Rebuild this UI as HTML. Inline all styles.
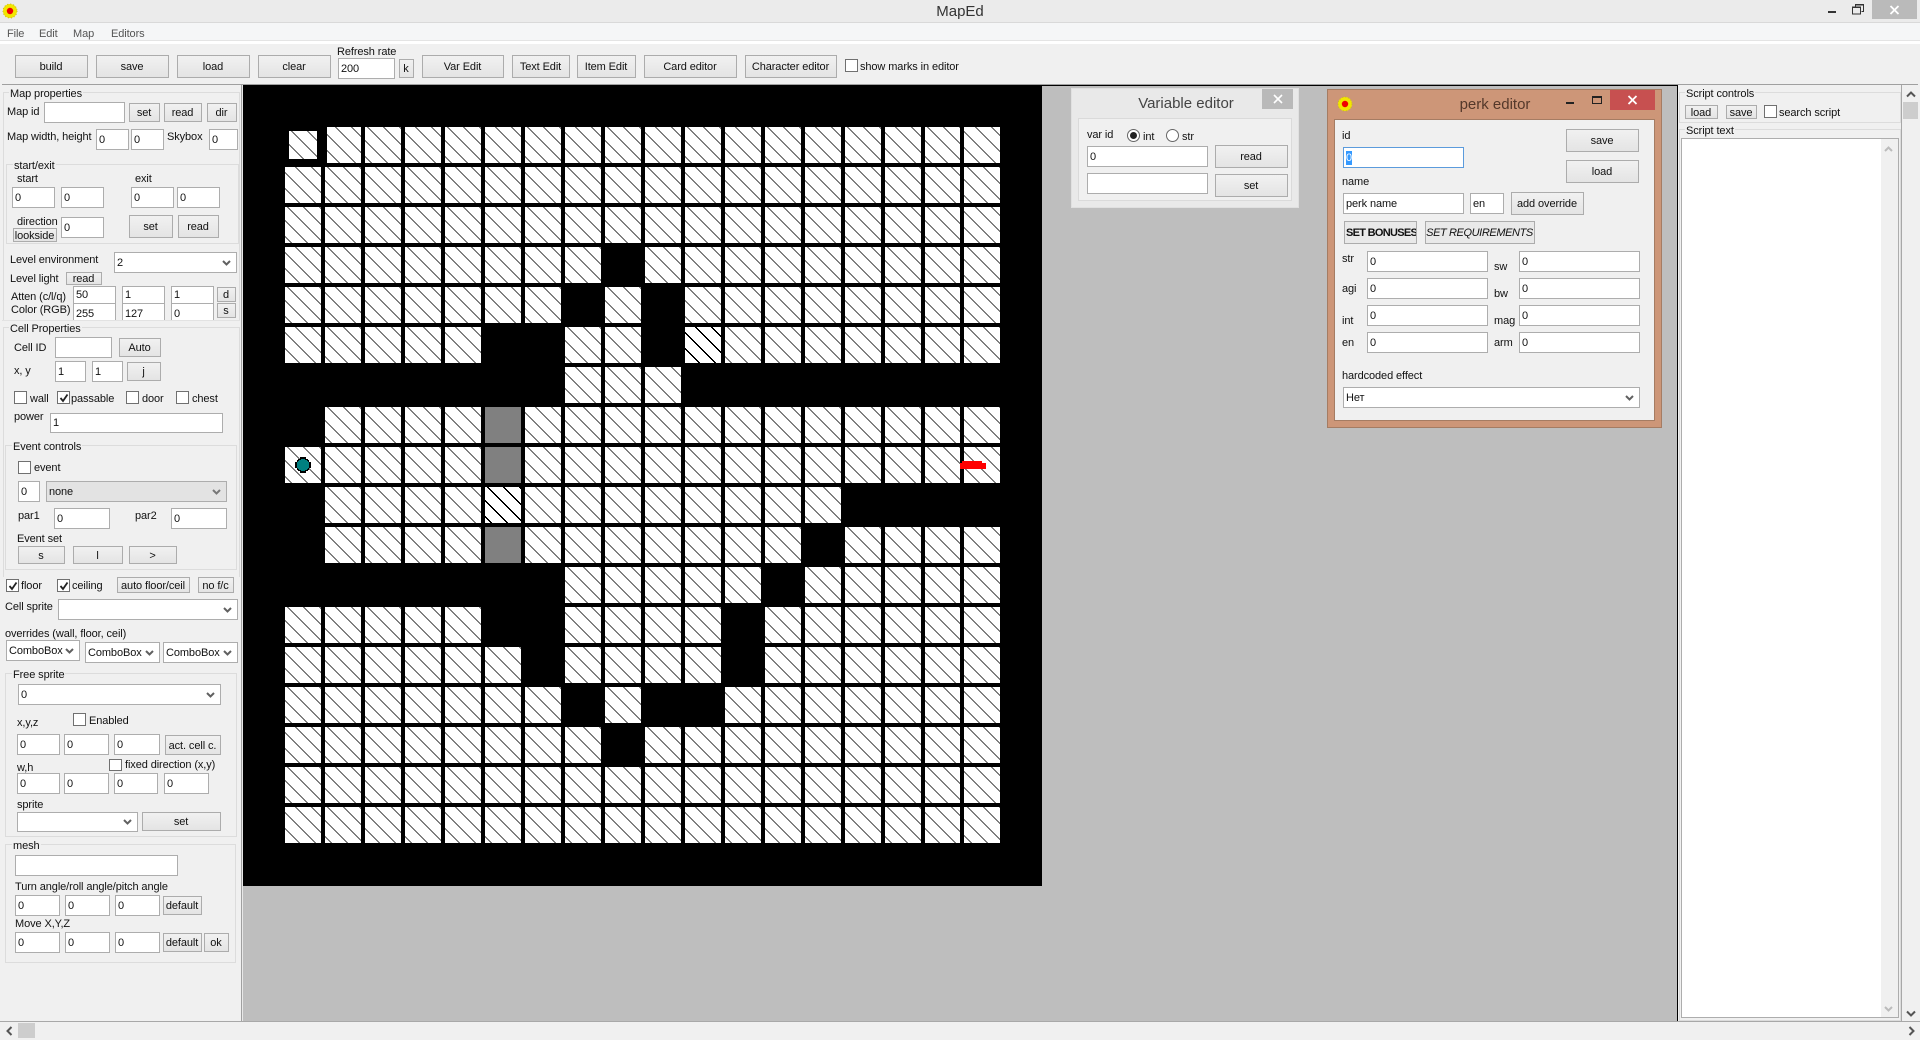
<!DOCTYPE html>
<html><head><meta charset="utf-8"><title>MapEd</title>
<style>
html,body{margin:0;padding:0;width:1920px;height:1040px;overflow:hidden;background:#f0f0f0}
body{position:relative;font:11px/14px "Liberation Sans","Noto Sans CJK SC",sans-serif;color:#000;letter-spacing:-.1px}
div,svg{position:absolute;box-sizing:border-box}
.l{white-space:nowrap;line-height:14px;color:#111;margin-top:1px}
.i{background:#fff;border:1px solid #adadad;padding:0 0 0 2px;display:flex;align-items:center;white-space:nowrap;overflow:hidden;color:#111}
.b{background:linear-gradient(#f1f1f1,#e4e4e4);border:1px solid #acacac;display:flex;align-items:center;justify-content:center;white-space:nowrap;overflow:hidden;color:#111;padding:1px 1px 0 0}
.g{border:1px solid #dcdcdc}
.t{background:#f0f0f0;padding:0 1px;line-height:14px;white-space:nowrap;color:#111;margin-top:1px}
.c{background:#fff;border:1px solid #707070;width:13px;height:13px}
.v{right:5px;top:50%;margin-top:-3px}
.s{background:#fff;border:1px solid #adadad;padding-left:2px;display:flex;align-items:center;white-space:nowrap;overflow:hidden;color:#111}
</style></head>
<body>
<!-- title bar -->
<div style="left:0;top:0;width:1920px;height:23px;background:#ebebeb;border-bottom:1px solid #d9d9d9"></div>
<svg style="left:1px;top:3px" width="18" height="16"><circle cx="9" cy="8" r="7" fill="#f2e600"/><circle cx="9" cy="8" r="7" fill="none" stroke="#c8b820" stroke-dasharray="1 2"/><circle cx="9" cy="8" r="3.2" fill="#f00000"/></svg>
<div style="left:860px;top:2px;width:200px;text-align:center;font-size:15px;line-height:19px;color:#333;letter-spacing:0">MapEd</div>
<div style="left:1828px;top:11px;width:8px;height:2px;background:#333"></div>
<svg style="left:1852px;top:4px" width="13" height="11"><path d="M3.5 2.5V.5h8v7h-2M.5 3h8v7h-8z" fill="none" stroke="#333"/><path d="M.5 3.5h8M3.5 1h8" stroke="#333"/></svg>
<div style="left:1872px;top:0;width:45px;height:19px;background:#bababa"></div>
<svg style="left:1889px;top:5px" width="11" height="10"><path d="M1.5 1l8 8M9.5 1l-8 8" stroke="#fff" stroke-width="1.8"/></svg>
<!-- menu -->
<div style="left:0;top:23px;width:1920px;height:18px;background:#f5f6f7;border-bottom:1px solid #e4e4e4"></div>
<div class="l" style="left:7px;top:26px;color:#555">File</div>
<div class="l" style="left:39px;top:26px;color:#555">Edit</div>
<div class="l" style="left:73px;top:26px;color:#555">Map</div>
<div class="l" style="left:111px;top:26px;color:#555">Editors</div>
<div style="left:0;top:41px;width:1920px;height:3px;background:#fff"></div>
<!-- toolbar -->
<div style="left:2px;top:44px;width:1916px;height:41px;background:#f0f0f0;border-bottom:1px solid #a0a0a0"></div>
<div class="b" style="left:15px;top:55px;width:73px;height:23px">build</div>
<div class="b" style="left:96px;top:55px;width:73px;height:23px">save</div>
<div class="b" style="left:177px;top:55px;width:73px;height:23px">load</div>
<div class="b" style="left:258px;top:55px;width:73px;height:23px">clear</div>
<div class="l" style="left:337px;top:44px">Refresh rate</div>
<div class="i" style="left:338px;top:58px;width:57px;height:21px">200</div>
<div class="b" style="left:399px;top:59px;width:15px;height:19px">k</div>
<div class="b" style="left:422px;top:55px;width:82px;height:23px">Var Edit</div>
<div class="b" style="left:512px;top:55px;width:58px;height:23px">Text Edit</div>
<div class="b" style="left:577px;top:55px;width:59px;height:23px">Item Edit</div>
<div class="b" style="left:644px;top:55px;width:93px;height:23px">Card editor</div>
<div class="b" style="left:745px;top:55px;width:92px;height:23px">Character editor</div>
<div class="c" style="left:845px;top:59px"></div>
<div class="l" style="left:860px;top:59px">show marks in editor</div>

<!-- MDI area -->
<div style="left:242px;top:85px;width:1436px;height:937px;background:#bebebe;border-left:1px solid #e8e8e8"></div>
<div style="left:1677px;top:85px;width:1px;height:937px;background:#000"></div>
<div style="left:243px;top:85px;width:1434px;height:1px;background:#000"></div>
<svg style="left:243px;top:85px" width="799" height="801" viewBox="243 85 799 801" shape-rendering="crispEdges">
<defs>
<pattern id="h" width="16" height="16" patternUnits="userSpaceOnUse" x="0" y="0"><rect width="16" height="16" fill="#fff"/><path d="M0 0h2v1H0zM1 1h2v1H1zM2 2h2v1H2zM3 3h2v1H3zM4 4h2v1H4zM5 5h2v1H5zM6 6h2v1H6zM7 7h2v1H7zM8 8h2v1H8zM9 9h2v1H9zM10 10h2v1h-2zM11 11h2v1h-2zM12 12h2v1h-2zM13 13h2v1h-2zM14 14h2v1h-2zM15 15h1v1h-1zM0 15h1v1H0z" fill="#808080"/></pattern>
<pattern id="d" width="16" height="16" patternUnits="userSpaceOnUse" x="0" y="0"><rect width="16" height="16" fill="#fff"/><path d="M0 0h2v1H0zM1 1h2v1H1zM2 2h2v1H2zM3 3h2v1H3zM4 4h2v1H4zM5 5h2v1H5zM6 6h2v1H6zM7 7h2v1H7zM8 8h2v1H8zM9 9h2v1H9zM10 10h2v1h-2zM11 11h2v1h-2zM12 12h2v1h-2zM13 13h2v1h-2zM14 14h2v1h-2zM15 15h1v1h-1zM0 15h1v1H0z" fill="#000"/></pattern>
</defs>
<rect x="243" y="85" width="799" height="801" fill="#000"/>
<rect x="285" y="127" width="715" height="716" fill="url(#h)"/>
<path fill="#000" d="M321 127h4v716h-4zM361 127h4v716h-4zM401 127h4v716h-4zM441 127h4v716h-4zM481 127h4v716h-4zM521 127h4v716h-4zM561 127h4v716h-4zM601 127h4v716h-4zM641 127h4v716h-4zM681 127h4v716h-4zM721 127h4v716h-4zM761 127h4v716h-4zM801 127h4v716h-4zM841 127h4v716h-4zM881 127h4v716h-4zM921 127h4v716h-4zM960 127h4v716h-4z
M285 163h716v4H285zM285 203h716v4H285zM285 243h716v4H285zM285 283h716v4H285zM285 323h716v4H285zM285 363h716v4H285zM285 403h716v4H285zM285 443h716v4H285zM285 483h716v4H285zM285 523h716v4H285zM285 563h716v4H285zM285 603h716v4H285zM285 643h716v4H285zM285 683h716v4H285zM285 723h716v4H285zM285 763h716v4H285zM285 803h716v4H285z"/>
<!-- missing cells -->
<path fill="#000" d="M285 127h42v36h-42zM605 247h36v36h-36zM565 287h36v36h-36zM645 287h36v36h-36zM485 327h76v36h-76zM645 327h36v36h-36zM285 367h276v36H285zM685 367h316v36H685zM285 407h36v36h-36zM285 487h36v36h-36zM845 487h156v36H845zM285 527h36v36h-36zM805 527h36v36h-36zM285 567h276v36H285zM765 567h36v36h-36zM485 607h76v36h-76zM725 607h36v36h-36zM525 647h36v36h-36zM725 647h36v36h-36zM565 687h36v36h-36zM645 687h76v36h-76zM605 727h36v36h-36z"/>
<rect x="289" y="131" width="28" height="28" fill="url(#h)"/>
<rect x="485" y="407" width="36" height="36" fill="#808080"/>
<rect x="485" y="447" width="36" height="36" fill="#808080"/>
<rect x="485" y="527" width="36" height="36" fill="#808080"/>
<rect x="485" y="487" width="36" height="36" fill="url(#d)"/>
<rect x="685" y="327" width="36" height="36" fill="url(#d)"/>
<!-- dot -->
<path d="M300 457h6v2h2v1h1v2h2v6h-2v2h-1v1h-2v2h-6v-2h-2v-1h-1v-2h-2v-6h2v-2h1v-1h2z" fill="#000"/>
<path d="M301 459h4v1h2v1h1v1h1v6h-1v1h-1v1h-2v1h-4v-1h-2v-1h-1v-1h-1v-6h1v-1h1v-1h2z" fill="#008080"/>
<!-- red marker -->
<path d="M962 461h20v2h4v6h-26v-6h2z" fill="#f00"/>
</svg>

<!-- LEFT PANEL -->
<div style="left:0;top:85px;width:242px;height:937px;background:#f0f0f0;border-right:1px solid #a0a0a0"></div>
<div class="g" style="left:3px;top:92px;width:237px;height:235px"></div>
<div class="t" style="left:9px;top:86px">Map properties</div>
<div class="l" style="left:7px;top:104px">Map id</div>
<div class="i" style="left:44px;top:102px;width:81px;height:21px"></div>
<div class="b" style="left:129px;top:103px;width:31px;height:19px">set</div>
<div class="b" style="left:164px;top:103px;width:38px;height:19px">read</div>
<div class="b" style="left:207px;top:103px;width:30px;height:19px">dir</div>
<div class="l" style="left:7px;top:129px">Map width, height</div>
<div class="i" style="left:96px;top:129px;width:33px;height:21px">0</div>
<div class="i" style="left:131px;top:129px;width:33px;height:21px">0</div>
<div class="l" style="left:167px;top:129px">Skybox</div>
<div class="i" style="left:209px;top:129px;width:29px;height:21px">0</div>

<div class="g" style="left:6px;top:164px;width:233px;height:80px"></div>
<div class="t" style="left:13px;top:158px">start/exit</div>
<div class="l" style="left:17px;top:171px">start</div>
<div class="l" style="left:135px;top:171px">exit</div>
<div class="i" style="left:12px;top:187px;width:43px;height:21px">0</div>
<div class="i" style="left:61px;top:187px;width:43px;height:21px">0</div>
<div class="i" style="left:131px;top:187px;width:43px;height:21px">0</div>
<div class="i" style="left:177px;top:187px;width:43px;height:21px">0</div>
<div class="l" style="left:17px;top:214px">direction</div>
<div class="b" style="left:13px;top:228px;width:44px;height:14px">lookside</div>
<div class="i" style="left:61px;top:217px;width:43px;height:21px">0</div>
<div class="b" style="left:129px;top:215px;width:44px;height:23px">set</div>
<div class="b" style="left:178px;top:215px;width:41px;height:23px">read</div>

<div class="l" style="left:10px;top:252px">Level environment</div>
<div class="s" style="left:114px;top:252px;width:123px;height:21px">2<svg class="v" width="9" height="6"><path d="M1 1l3.5 3.5L8 1" fill="none" stroke="#606060" stroke-width="2"/></svg></div>
<div class="l" style="left:10px;top:271px">Level light</div>
<div class="b" style="left:66px;top:272px;width:36px;height:13px">read</div>
<div class="l" style="left:11px;top:289px">Atten (c/l/q)</div>
<div class="l" style="left:11px;top:302px">Color (RGB)</div>
<div class="i" style="left:73px;top:286px;width:43px;height:18px">50</div>
<div class="i" style="left:122px;top:286px;width:43px;height:18px">1</div>
<div class="i" style="left:171px;top:286px;width:43px;height:18px">1</div>
<div class="b" style="left:217px;top:287px;width:19px;height:15px">d</div>
<div class="i" style="left:73px;top:303px;width:43px;height:22px">255</div>
<div class="i" style="left:122px;top:303px;width:43px;height:22px">127</div>
<div class="i" style="left:171px;top:303px;width:43px;height:22px">0</div>
<div class="b" style="left:217px;top:303px;width:19px;height:15px">s</div>
<div style="left:2px;top:320px;width:238px;height:200px;background:#f0f0f0;border-top:1px solid #e2e2e2"></div>

<!-- Cell properties -->
<div class="g" style="left:3px;top:327px;width:237px;height:250px;border-bottom:0"></div>
<div class="t" style="left:9px;top:321px">Cell Properties</div>
<div class="l" style="left:14px;top:340px">Cell ID</div>
<div class="i" style="left:55px;top:337px;width:57px;height:21px"></div>
<div class="b" style="left:119px;top:338px;width:42px;height:19px">Auto</div>
<div class="l" style="left:14px;top:363px">x, y</div>
<div class="i" style="left:55px;top:361px;width:31px;height:21px">1</div>
<div class="i" style="left:92px;top:361px;width:31px;height:21px">1</div>
<div class="b" style="left:127px;top:362px;width:34px;height:19px">j</div>
<div class="c" style="left:14px;top:391px"></div><div class="l" style="left:30px;top:391px">wall</div>
<div class="c" style="left:57px;top:391px"><svg style="left:1px;top:1px" width="10" height="10"><path d="M1.5 5l2.5 3L8.5 1.5" fill="none" stroke="#222" stroke-width="1.8"/></svg></div><div class="l" style="left:71px;top:391px">passable</div>
<div class="c" style="left:126px;top:391px"></div><div class="l" style="left:142px;top:391px">door</div>
<div class="c" style="left:176px;top:391px"></div><div class="l" style="left:192px;top:391px">chest</div>
<div class="l" style="left:14px;top:409px">power</div>
<div class="i" style="left:50px;top:413px;width:173px;height:20px">1</div>

<div class="g" style="left:5px;top:445px;width:232px;height:125px"></div>
<div class="t" style="left:12px;top:439px">Event controls</div>
<div class="c" style="left:18px;top:461px"></div><div class="l" style="left:34px;top:460px">event</div>
<div class="i" style="left:18px;top:481px;width:22px;height:21px">0</div>
<div class="s" style="left:46px;top:481px;width:181px;height:21px;background:#e3e3e3">none<svg class="v" width="9" height="6"><path d="M1 1l3.5 3.5L8 1" fill="none" stroke="#777" stroke-width="2"/></svg></div>
<div class="l" style="left:18px;top:508px">par1</div>
<div class="i" style="left:54px;top:508px;width:56px;height:21px">0</div>
<div class="l" style="left:135px;top:508px">par2</div>
<div class="i" style="left:171px;top:508px;width:56px;height:21px">0</div>
<div class="l" style="left:17px;top:531px">Event set</div>
<div class="b" style="left:18px;top:546px;width:47px;height:18px">s</div>
<div class="b" style="left:73px;top:546px;width:50px;height:18px">l</div>
<div class="b" style="left:129px;top:546px;width:48px;height:18px">&gt;</div>

<div class="c" style="left:6px;top:579px"><svg style="left:1px;top:1px" width="10" height="10"><path d="M1.5 5l2.5 3L8.5 1.5" fill="none" stroke="#222" stroke-width="1.8"/></svg></div><div class="l" style="left:21px;top:578px">floor</div>
<div class="c" style="left:57px;top:579px"><svg style="left:1px;top:1px" width="10" height="10"><path d="M1.5 5l2.5 3L8.5 1.5" fill="none" stroke="#222" stroke-width="1.8"/></svg></div><div class="l" style="left:72px;top:578px">ceiling</div>
<div class="b" style="left:117px;top:577px;width:73px;height:16px">auto floor/ceil</div>
<div class="b" style="left:198px;top:577px;width:36px;height:16px">no f/c</div>
<div class="l" style="left:5px;top:599px">Cell sprite</div>
<div class="s" style="left:58px;top:599px;width:180px;height:21px"><svg class="v" width="9" height="6"><path d="M1 1l3.5 3.5L8 1" fill="none" stroke="#606060" stroke-width="2"/></svg></div>
<div class="l" style="left:5px;top:626px">overrides (wall, floor, ceil)</div>
<div class="s" style="left:6px;top:640px;width:74px;height:21px">ComboBox<svg class="v" width="9" height="6"><path d="M1 1l3.5 3.5L8 1" fill="none" stroke="#606060" stroke-width="2"/></svg></div>
<div class="s" style="left:85px;top:642px;width:75px;height:21px">ComboBox<svg class="v" width="9" height="6"><path d="M1 1l3.5 3.5L8 1" fill="none" stroke="#606060" stroke-width="2"/></svg></div>
<div class="s" style="left:163px;top:642px;width:75px;height:21px">ComboBox<svg class="v" width="9" height="6"><path d="M1 1l3.5 3.5L8 1" fill="none" stroke="#606060" stroke-width="2"/></svg></div>

<!-- Free sprite -->
<div class="g" style="left:5px;top:673px;width:232px;height:164px"></div>
<div class="t" style="left:12px;top:667px">Free sprite</div>
<div class="s" style="left:18px;top:684px;width:203px;height:21px">0<svg class="v" width="9" height="6"><path d="M1 1l3.5 3.5L8 1" fill="none" stroke="#606060" stroke-width="2"/></svg></div>
<div class="l" style="left:17px;top:715px">x,y,z</div>
<div class="c" style="left:73px;top:713px"></div><div class="l" style="left:89px;top:713px">Enabled</div>
<div class="i" style="left:17px;top:734px;width:43px;height:21px">0</div>
<div class="i" style="left:64px;top:734px;width:45px;height:21px">0</div>
<div class="i" style="left:114px;top:734px;width:46px;height:21px">0</div>
<div class="b" style="left:165px;top:735px;width:56px;height:20px">act. cell c.</div>
<div class="l" style="left:17px;top:760px">w,h</div>
<div class="c" style="left:109px;top:759px;height:12px"></div><div class="l" style="left:125px;top:757px">fixed direction (x,y)</div>
<div class="i" style="left:17px;top:773px;width:43px;height:21px">0</div>
<div class="i" style="left:64px;top:773px;width:45px;height:21px">0</div>
<div class="i" style="left:114px;top:773px;width:44px;height:21px">0</div>
<div class="i" style="left:164px;top:773px;width:45px;height:21px">0</div>
<div class="l" style="left:17px;top:797px">sprite</div>
<div class="s" style="left:17px;top:812px;width:121px;height:20px"><svg class="v" width="9" height="6"><path d="M1 1l3.5 3.5L8 1" fill="none" stroke="#606060" stroke-width="2"/></svg></div>
<div class="b" style="left:142px;top:812px;width:79px;height:19px">set</div>

<!-- mesh -->
<div class="g" style="left:5px;top:844px;width:231px;height:119px"></div>
<div class="t" style="left:12px;top:838px">mesh</div>
<div class="i" style="left:15px;top:855px;width:163px;height:21px"></div>
<div class="l" style="left:15px;top:879px">Turn angle/roll angle/pitch angle</div>
<div class="i" style="left:15px;top:895px;width:45px;height:21px">0</div>
<div class="i" style="left:65px;top:895px;width:45px;height:21px">0</div>
<div class="i" style="left:115px;top:895px;width:45px;height:21px">0</div>
<div class="b" style="left:163px;top:896px;width:39px;height:19px">default</div>
<div class="l" style="left:15px;top:916px">Move X,Y,Z</div>
<div class="i" style="left:15px;top:932px;width:45px;height:21px">0</div>
<div class="i" style="left:65px;top:932px;width:45px;height:21px">0</div>
<div class="i" style="left:115px;top:932px;width:45px;height:21px">0</div>
<div class="b" style="left:163px;top:933px;width:39px;height:19px">default</div>
<div class="b" style="left:204px;top:933px;width:25px;height:19px">ok</div>

<!-- RIGHT PANEL -->
<div style="left:1678px;top:85px;width:224px;height:937px;background:#f0f0f0;border-right:1px solid #a8a8a8"></div>
<div class="g" style="left:1679px;top:92px;width:222px;height:31px"></div>
<div class="t" style="left:1685px;top:86px">Script controls</div>
<div class="b" style="left:1685px;top:105px;width:33px;height:14px">load</div>
<div class="b" style="left:1726px;top:105px;width:31px;height:14px">save</div>
<div class="c" style="left:1764px;top:105px"></div><div class="l" style="left:1779px;top:105px">search script</div>
<div class="g" style="left:1679px;top:129px;width:222px;height:892px"></div>
<div class="t" style="left:1685px;top:123px">Script text</div>
<div style="left:1681px;top:138px;width:218px;height:880px;background:#fff;border:1px solid #adadad"></div>
<div style="left:1881px;top:139px;width:17px;height:878px;background:#f0f0f0"></div>
<svg style="left:1884px;top:146px" width="9" height="6"><path d="M1 5l3.5-3.5L8 5" fill="none" stroke="#bbb" stroke-width="2"/></svg>
<svg style="left:1884px;top:1006px" width="9" height="6"><path d="M1 1l3.5 3.5L8 1" fill="none" stroke="#bbb" stroke-width="2"/></svg>
<!-- outer v scroll -->
<div style="left:1902px;top:85px;width:18px;height:937px;background:#f0f0f0"></div>
<svg style="left:1906px;top:91px" width="10" height="7"><path d="M1 5.5l4-4 4 4" fill="none" stroke="#555" stroke-width="2"/></svg>
<div style="left:1903px;top:102px;width:15px;height:17px;background:#cdcdcd"></div>
<svg style="left:1906px;top:1010px" width="10" height="7"><path d="M1 1.5l4 4 4-4" fill="none" stroke="#555" stroke-width="2"/></svg>
<!-- bottom scroll -->
<div style="left:0;top:1021px;width:1920px;height:19px;background:#f0f0f0;border-top:1px solid #a8a8a8"></div>
<svg style="left:6px;top:1026px" width="7" height="10"><path d="M5.5 1l-4 4 4 4" fill="none" stroke="#555" stroke-width="2"/></svg>
<div style="left:18px;top:1023px;width:17px;height:15px;background:#cdcdcd"></div>
<svg style="left:1908px;top:1026px" width="7" height="10"><path d="M1.5 1l4 4-4 4" fill="none" stroke="#555" stroke-width="2"/></svg>

<!-- Variable editor -->
<div style="left:1071px;top:88px;width:228px;height:120px;background:#e9e9e9;border:1px solid #e0e0e0"></div>
<div style="left:1086px;top:94px;width:200px;text-align:center;font-size:15px;line-height:19px;color:#444;letter-spacing:0">Variable editor</div>
<div style="left:1262px;top:89px;width:31px;height:20px;background:#b9b9b9"></div>
<svg style="left:1273px;top:94px" width="10" height="10"><path d="M1 1l8 8M9 1l-8 8" stroke="#fff" stroke-width="1.6"/></svg>
<div style="left:1078px;top:118px;width:214px;height:83px;background:#f0f0f0;border:1px solid #dadada"></div>
<div class="l" style="left:1087px;top:127px">var id</div>
<div style="left:1127px;top:129px;width:13px;height:13px;border:1px solid #666;border-radius:50%;background:#fff"></div>
<div style="left:1130px;top:132px;width:7px;height:7px;border-radius:50%;background:#222"></div>
<div class="l" style="left:1143px;top:129px">int</div>
<div style="left:1166px;top:129px;width:13px;height:13px;border:1px solid #666;border-radius:50%;background:#fff"></div>
<div class="l" style="left:1182px;top:129px">str</div>
<div class="i" style="left:1087px;top:146px;width:121px;height:21px">0</div>
<div class="b" style="left:1215px;top:145px;width:73px;height:23px">read</div>
<div class="i" style="left:1087px;top:173px;width:121px;height:21px"></div>
<div class="b" style="left:1215px;top:174px;width:73px;height:23px">set</div>

<!-- Perk editor -->
<div style="left:1327px;top:89px;width:335px;height:339px;background:#cd9678;border:1px solid #a57c63"></div>
<svg style="left:1336px;top:96px" width="18" height="16"><circle cx="9" cy="8" r="7" fill="#f2e600"/><circle cx="9" cy="8" r="7" fill="none" stroke="#c8b820" stroke-dasharray="1 2"/><circle cx="9" cy="8" r="3.2" fill="#f00000"/></svg>
<div style="left:1395px;top:95px;width:200px;text-align:center;font-size:15px;line-height:19px;color:#54382a;letter-spacing:0">perk editor</div>
<div style="left:1566px;top:102px;width:8px;height:2px;background:#222"></div>
<div style="left:1592px;top:96px;width:10px;height:8px;border:1px solid #222;border-top-width:2px"></div>
<div style="left:1610px;top:90px;width:45px;height:20px;background:#c75050"></div>
<svg style="left:1627px;top:95px" width="11" height="10"><path d="M1.5 1l8 8M9.5 1l-8 8" stroke="#fff" stroke-width="1.8"/></svg>
<div style="left:1334px;top:119px;width:321px;height:302px;background:#f0f0f0;border:1px solid #a57c63"></div>
<div class="l" style="left:1342px;top:128px">id</div>
<div class="i" style="left:1343px;top:147px;width:121px;height:21px;border-color:#5b9bdc"><span style="background:#3399ff;color:#fff;line-height:14px">0</span></div>
<div class="b" style="left:1566px;top:129px;width:73px;height:23px">save</div>
<div class="b" style="left:1566px;top:160px;width:73px;height:23px">load</div>
<div class="l" style="left:1342px;top:174px">name</div>
<div class="i" style="left:1343px;top:193px;width:121px;height:21px">perk name</div>
<div class="i" style="left:1470px;top:193px;width:34px;height:21px">en</div>
<div class="b" style="left:1511px;top:192px;width:73px;height:23px">add override</div>
<div class="b" style="left:1344px;top:221px;width:73px;height:23px;font-weight:bold;background:#e9e9e9;justify-content:flex-start;padding-left:1px;letter-spacing:-.7px">SET BONUSES</div>
<div class="b" style="left:1425px;top:221px;width:110px;height:23px;font-style:italic;background:#e9e9e9;letter-spacing:-.4px">SET REQUIREMENTS</div>
<div class="l" style="left:1342px;top:251px">str</div>
<div class="i" style="left:1367px;top:251px;width:121px;height:21px">0</div>
<div class="l" style="left:1494px;top:259px">sw</div>
<div class="i" style="left:1519px;top:251px;width:121px;height:21px">0</div>
<div class="l" style="left:1342px;top:281px">agi</div>
<div class="i" style="left:1367px;top:278px;width:121px;height:21px">0</div>
<div class="l" style="left:1494px;top:286px">bw</div>
<div class="i" style="left:1519px;top:278px;width:121px;height:21px">0</div>
<div class="l" style="left:1342px;top:313px">int</div>
<div class="i" style="left:1367px;top:305px;width:121px;height:21px">0</div>
<div class="l" style="left:1494px;top:313px">mag</div>
<div class="i" style="left:1519px;top:305px;width:121px;height:21px">0</div>
<div class="l" style="left:1342px;top:335px">en</div>
<div class="i" style="left:1367px;top:332px;width:121px;height:21px">0</div>
<div class="l" style="left:1494px;top:335px">arm</div>
<div class="i" style="left:1519px;top:332px;width:121px;height:21px">0</div>
<div class="l" style="left:1342px;top:368px">hardcoded effect</div>
<div class="s" style="left:1343px;top:387px;width:297px;height:21px">Нет<svg class="v" width="9" height="6"><path d="M1 1l3.5 3.5L8 1" fill="none" stroke="#606060" stroke-width="2"/></svg></div>
</body></html>
